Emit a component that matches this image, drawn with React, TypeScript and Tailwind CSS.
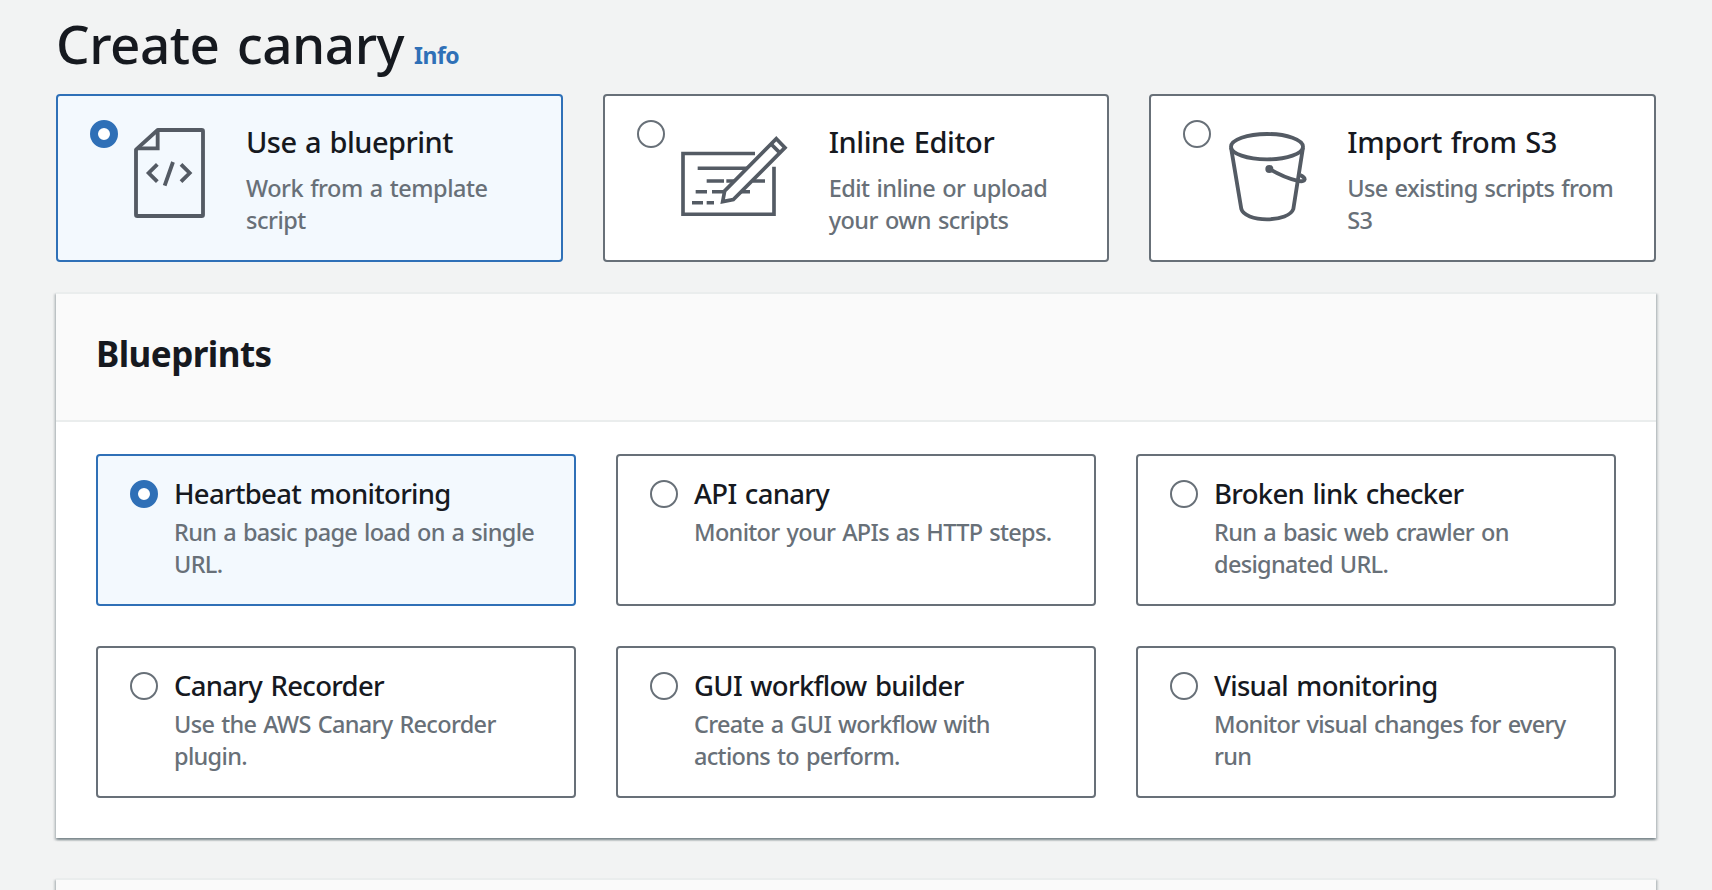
import React, { useState } from "react";
import clsx from "clsx";

function BlueprintIcon() {
  return (
    <svg viewBox="43 39 216 270" className="mt-2 h-[90px] w-[72px] shrink-0" fill="none" stroke="#545b64" strokeWidth="11.5" strokeLinejoin="round">
      <path d="M114 45H246Q250 45 250 49V299Q250 303 246 303H53Q49 303 49 299V104Z" />
      <path d="M114 45V100H53" strokeLinejoin="miter" />
      <path d="M113 148L87 174L113 200M184 148L210 174L184 200M160 141L135 212" strokeLinejoin="miter" />
    </svg>
  );
}

function EditorIcon() {
  return (
    <svg viewBox="33 32 321 242" className="mt-[15.5px] h-[80.67px] w-[107px] shrink-0" fill="none" stroke="#545b64" strokeWidth="11">
      <path d="M255 84.500H39V267H312V124" />
      <path d="M83 129H232M110 167H162M169 167H196M248 167H285M77 199.500H111M126 199.500H166M212 199.500H240M66 232.500H99M110 232.500H132" strokeWidth="10.500" />
      <path d="M319 40L345 67L190 223L158 229L164 197Z" fill="#fff" />
      <path d="M303 56L329 82" />
    </svg>
  );
}

function BucketIcon() {
  return (
    <svg viewBox="142 66 240 270" className="mt-3 h-[90px] w-20 shrink-0" fill="none" stroke="#545b64" strokeWidth="11.5">
      <ellipse cx="262" cy="110" rx="108" ry="38" />
      <path d="M154 112L185 297C190 315 222 328 262 328S335 315 341 297L370 112" />
      <path d="M269 177Q315 204 352 212C382 219 380 203 361 195" />
      <circle cx="269" cy="177" r="12" fill="#545b64" stroke="none" />
    </svg>
  );
}

const methods = [
  { title: "Use a blueprint", text: "Work from a template script", icon: <BlueprintIcon />, titleClass: "tracking-[-0.54px]", textClass: "tracking-[-0.5px]" },
  { title: "Inline Editor", text: "Edit inline or upload your own scripts", icon: <EditorIcon />, titleClass: "pl-px tracking-[-0.42px]", textClass: "pl-px tracking-[-0.55px]" },
  { title: "Import from S3", text: "Use existing scripts from S3", icon: <BucketIcon />, titleClass: "tracking-[-0.35px]", textClass: "tracking-[-0.65px]" },
];

const blueprints = [
  { title: "Heartbeat monitoring", text: "Run a basic page load on a single URL." },
  { title: "API canary", text: "Monitor your APIs as HTTP steps." },
  { title: "Broken link checker", text: "Run a basic web crawler on designated URL." },
  { title: "Canary Recorder", text: "Use the AWS Canary Recorder plugin." },
  { title: "GUI workflow builder", text: "Create a GUI workflow with actions to perform." },
  { title: "Visual monitoring", text: "Monitor visual changes for every run" },
];

function Radio({ checked }: { checked: boolean }) {
  return (
    <span
      className={clsx(
        "size-7 shrink-0 rounded-full bg-white",
        checked ? "border-8 border-[#2f70b7]" : "border-2 border-[#687078]",
      )}
    />
  );
}

function Tile({ checked, onSelect, className, children }: { checked: boolean; onSelect: () => void; className: string; children: React.ReactNode }) {
  return (
    <button
      type="button"
      role="radio"
      aria-checked={checked}
      onClick={onSelect}
      className={clsx(
        "flex items-start gap-4 rounded-[4px] border-2 px-8 pt-6 text-left",
        checked ? "border-[#2f70b7] bg-[#f3f9fe]" : "border-[#687078] bg-white",
        className,
      )}
    >
      <Radio checked={checked} />
      {children}
    </button>
  );
}

const panelShadow = "shadow-[0_2px_2px_0_rgba(0,28,36,0.3),2px_2px_2px_0_rgba(0,28,36,0.15),-2px_2px_2px_0_rgba(0,28,36,0.15)]";

export default function App() {
  const [method, setMethod] = useState(0);
  const [blueprint, setBlueprint] = useState(0);
  return (
    <div className="h-[890px] overflow-hidden bg-[#f2f3f3] px-14 pt-3 font-['Noto_Sans','Open_Sans',sans-serif] text-[#16191f]">
      <header className="flex h-[82px] items-baseline gap-2.5">
        <h1 className="text-[53px] leading-[64px] font-medium tracking-[-0.5px] [word-spacing:4px]">Create canary</h1>
        <a className="text-[23px] font-bold tracking-[-0.5px] text-[#2f70b7]">Info</a>
      </header>

      <div role="radiogroup" className="grid grid-cols-3 gap-10">
        {methods.map((m, i) => (
          <Tile key={m.title} checked={i === method} onSelect={() => setMethod(i)} className="h-[168px]">
            <span className="flex flex-1 items-start gap-10 [word-spacing:1.5px]">
              {m.icon}
              <span className="mt-0.5 flex flex-1 flex-col gap-2.5">
                <span className={clsx("text-[29px] leading-10 font-medium", m.titleClass)}>{m.title}</span>
                <span className={clsx("text-[23.5px] leading-8 font-medium text-[#687078]", m.textClass)}>{m.text}</span>
              </span>
            </span>
          </Tile>
        ))}
      </div>

      <section className={clsx("mt-[30px] h-[546px] border-t-2 border-[#eaeded] bg-white", panelShadow)}>
        <div className="h-32 border-b-2 border-[#eaeded] bg-[#fafafa] px-10 pt-[38px]">
          <h2 className="text-[35px] leading-[44px] font-bold tracking-[-0.55px]">Blueprints</h2>
        </div>
        <div role="radiogroup" className="grid grid-cols-3 gap-10 px-10 pt-8">
          {blueprints.map((b, i) => (
            <Tile key={b.title} checked={i === blueprint} onSelect={() => setBlueprint(i)} className="h-[152px]">
              <span className="-mt-0.5 flex flex-1 flex-col gap-1.5">
                <span className="text-[27.5px] leading-8 font-medium tracking-[-0.7px] [word-spacing:2px]">{b.title}</span>
                <span className="text-[23.5px] leading-8 font-medium tracking-[-0.68px] text-[#687078] [word-spacing:1.5px]">{b.text}</span>
              </span>
            </Tile>
          ))}
        </div>
      </section>

      <section className={clsx("mt-10 h-40 border-t-2 border-[#eaeded] bg-[#fafafa]", panelShadow)} />
    </div>
  );
}
